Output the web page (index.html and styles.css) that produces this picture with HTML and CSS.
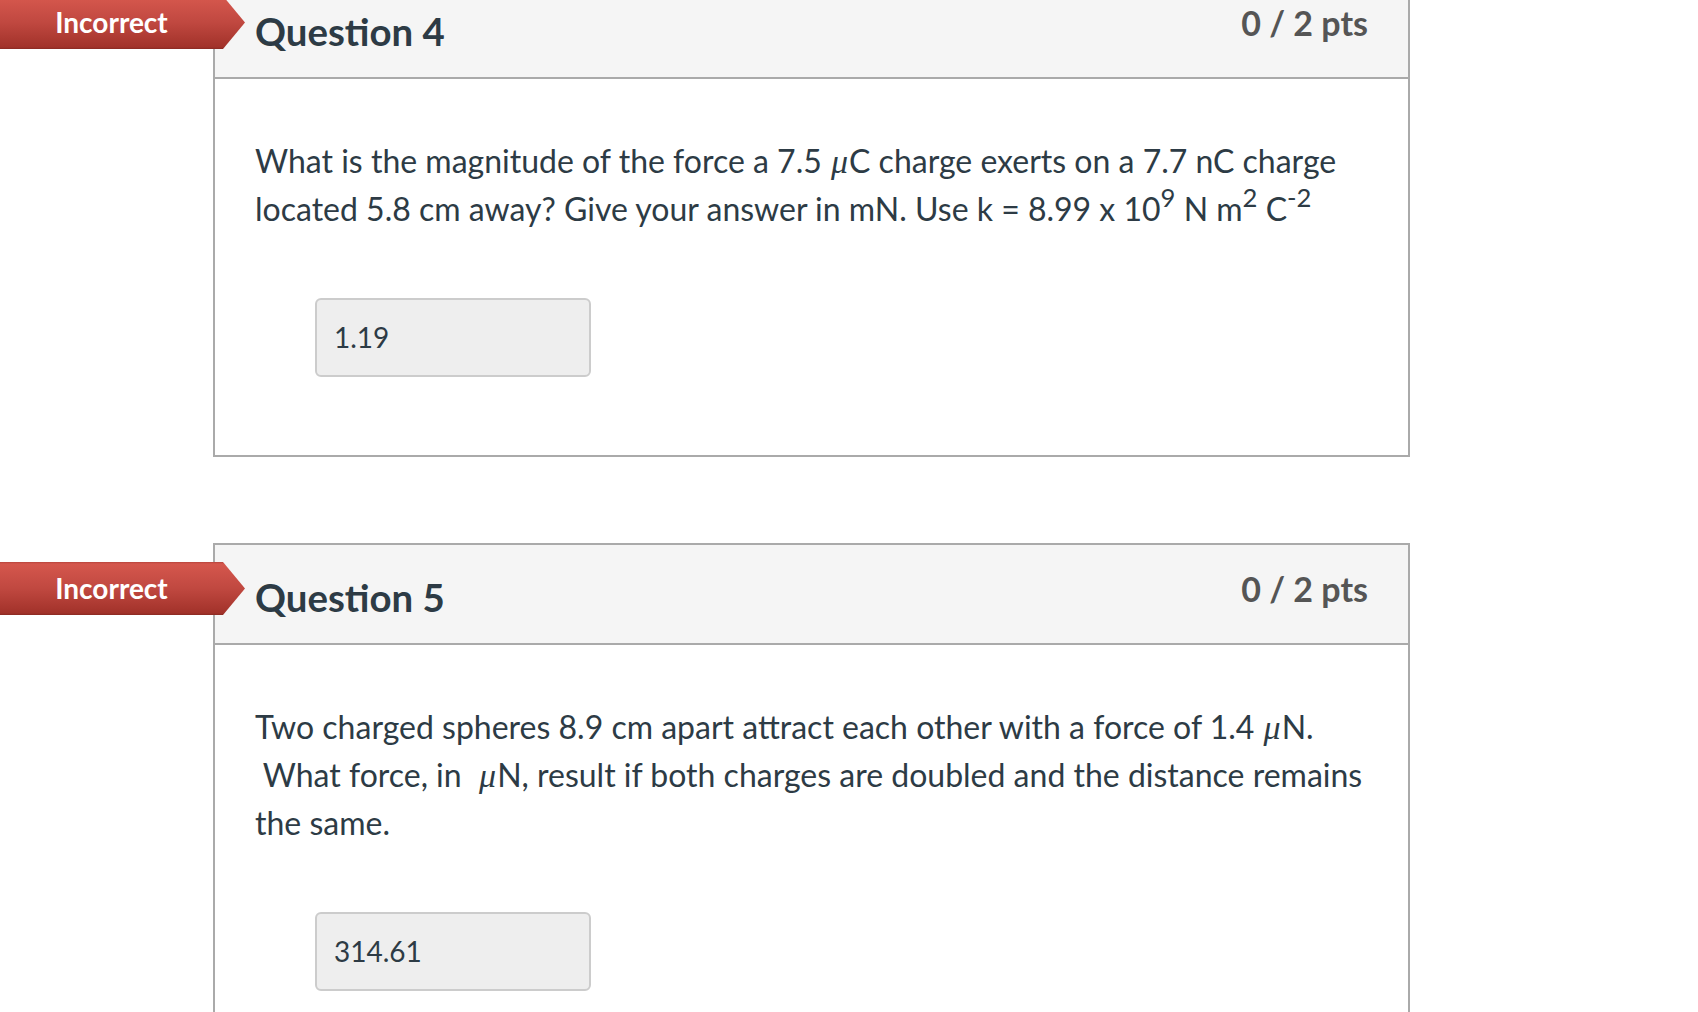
FILE: index.html
```html
<!DOCTYPE html>
<html lang="en">
<head>
<meta charset="utf-8">
<title>Quiz results</title>
<link rel="stylesheet" href="styles.css">
</head>
<body>
<div class="quiz">
  <div class="question q4">
    <div class="answer-arrow">Incorrect</div>
    <div class="header">
      <span class="name">Question 4</span>
      <span class="points">0 / 2 pts</span>
    </div>
    <div class="body">
      <p class="text">What is the magnitude of the force a 7.5 <span class="mu">μ</span>C charge exerts on a 7.7 nC charge<br>located 5.8 cm away? Give your answer in mN. Use k = 8.99 x 10<sup>9</sup> N m<sup>2</sup> C<sup>-2</sup></p>
      <div class="answer">1.19</div>
    </div>
  </div>

  <div class="question q5">
    <div class="answer-arrow">Incorrect</div>
    <div class="header">
      <span class="name">Question 5</span>
      <span class="points">0 / 2 pts</span>
    </div>
    <div class="body">
      <p class="text">Two charged spheres 8.9 cm apart attract each other with a force of 1.4 <span class="mu">μ</span>N.<br>&nbsp;What force, in &nbsp;<span class="mu">μ</span>N, result if both charges are doubled and the distance remains<br>the same.</p>
      <div class="answer">314.61</div>
    </div>
  </div>
</div>
</body>
</html>
```

FILE: styles.css
```css
html, body {
  margin: 0;
  padding: 0;
  background: #ffffff;
}

body {
  font-family: "Lato", "Liberation Sans", sans-serif;
  color: #2d3b45;
  overflow: hidden;
}

.quiz {
  margin-top: -23px;
  padding-left: 213px;
}

.question {
  position: relative;
  box-sizing: border-box;
  width: 1197px;
  border: 2px solid #aaaaaa;
  background: #ffffff;
}

.question + .question {
  margin-top: 86px;
}

.header {
  display: flex;
  justify-content: space-between;
  align-items: flex-start;
  background: #f5f5f5;
  border-bottom: 2px solid #aaaaaa;
  padding: 21px 40px 22px;
}

.name {
  font-size: 38.4px;
  font-weight: 700;
  line-height: 48px;
  padding-top: 7px;
  color: #2d3b45;
}

.points {
  font-size: 34px;
  font-weight: 700;
  line-height: 43px;
  margin-top: 1px;
  color: #555555;
}

.body {
  padding: 58px 40px 78px;
}

.text {
  margin: 0;
  font-size: 32px;
  line-height: 48px;
  white-space: nowrap;
}

.text sup {
  font-size: 25.6px;
  line-height: 0;
  vertical-align: 14px;
}

.mu {
  font-family: "Liberation Serif", "DejaVu Serif", serif;
  font-style: italic;
  font-size: 34px;
  line-height: 0;
  padding: 0 1px;
}

.answer {
  box-sizing: border-box;
  width: 276px;
  height: 79px;
  margin: 65px 0 0 60px;
  padding: 0 17px;
  background: #eeeeee;
  border: 2px solid #cccccc;
  border-radius: 6px;
  font-size: 28px;
  line-height: 75px;
  color: #2d3b45;
}

.answer-arrow {
  position: absolute;
  z-index: 2;
  left: -215px;
  top: 17px;
  width: 245px;
  height: 53px;
  box-sizing: border-box;
  padding-right: 22px;
  text-align: center;
  color: #ffffff;
  font-size: 28px;
  font-weight: 700;
  line-height: 53px;
  background: linear-gradient(to bottom, #b8453c 0, #d5574d 2px, #c04840 50%, #a2322a calc(100% - 2px), #8a2922 100%);
  clip-path: polygon(0 0, 223px 0, 245px 50%, 223px 100%, 0 100%);
}
```
